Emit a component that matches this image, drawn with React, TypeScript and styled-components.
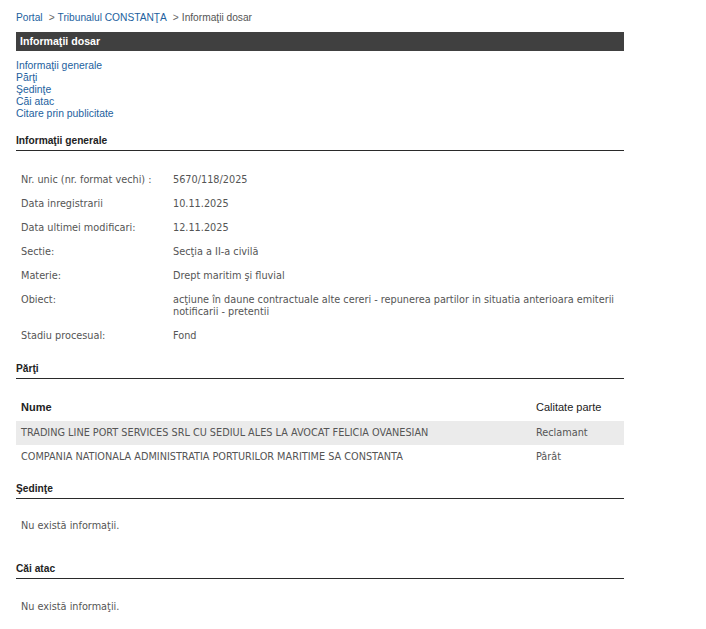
import styled, { createGlobalStyle } from 'styled-components';

const GlobalStyle = createGlobalStyle`
  html, body {
    margin: 0;
    padding: 0;
    background: #fff;
  }
  body {
    font-family: "Liberation Sans", Arial, sans-serif;
  }
`;

const body = '"DejaVu Sans Condensed", "DejaVu Sans", Tahoma, sans-serif';

const Page = styled.div`
  width: 608px;
  padding: 11px 0 20px 16px;
`;

const Crumbs = styled.div`
  font-size: 10.2px;
  line-height: 14px;
  height: 14px;
  color: #555;
  margin-bottom: 7px;
  white-space: nowrap;
`;

const Crumb = styled.a`
  color: #1d5f9e;
  text-decoration: none;
`;

const Sep = styled.span`
  color: #666;
  margin: 0 3px 0 6px;
`;

const TitleBar = styled.div`
  height: 19px;
  line-height: 19px;
  background: #404040;
  color: #fff;
  font-weight: bold;
  font-size: 10.6px;
  padding-left: 4px;
`;

const Nav = styled.nav`
  display: flex;
  flex-direction: column;
  margin-top: 9px;
  font-size: 10.4px;
  line-height: 12px;
`;

const NavLink = styled.a`
  color: #1d5f9e;
  text-decoration: none;
`;

const SectionTitle = styled.h3<{ $gap: number }>`
  margin: ${(p) => p.$gap}px 0 0;
  padding-bottom: 3px;
  border-bottom: 1px solid #2a2a2a;
  font-size: 10.2px;
  line-height: 13px;
  font-weight: bold;
  color: #222;
`;

const InfoTable = styled.table`
  width: 100%;
  table-layout: fixed;
  border-collapse: collapse;
  margin-top: 17px;
  font-family: ${body};
  font-size: 10.8px;
  color: #555;

  td {
    padding: 6px 5px;
    line-height: 12px;
    vertical-align: top;
  }
`;

const PartyTable = styled.table`
  width: 100%;
  table-layout: fixed;
  border-collapse: collapse;
  margin-top: 15px;
  font-family: ${body};
  font-size: 10.8px;
  color: #555;

  td {
    padding: 6px 5px;
    line-height: 12px;
    height: 12px;
    white-space: nowrap;
  }
`;

const HeadCell = styled.th<{ $bold?: boolean }>`
  text-align: left;
  padding: 7px 5px 8px;
  line-height: 12px;
  font-family: "Liberation Sans", Arial, sans-serif;
  font-size: 11px;
  font-weight: ${(p) => (p.$bold ? 'bold' : 'normal')};
  color: #222;
`;

const PartyRow = styled.tr<{ $shaded?: boolean }>`
  background: ${(p) => (p.$shaded ? '#ebebeb' : 'transparent')};
`;

const Empty = styled.p<{ $gap: number }>`
  margin: ${(p) => p.$gap}px 0 0;
  padding-left: 5px;
  font-family: ${body};
  font-size: 10.8px;
  line-height: 12px;
  color: #555;
`;

const info: [string, string][] = [
  ['Nr. unic (nr. format vechi) :', '5670/118/2025'],
  ['Data inregistrarii', '10.11.2025'],
  ['Data ultimei modificari:', '12.11.2025'],
  ['Sectie:', 'Secţia a II-a civilă'],
  ['Materie:', 'Drept maritim şi fluvial'],
  [
    'Obiect:',
    'acţiune în daune contractuale alte cereri - repunerea partilor in situatia anterioara emiterii notificarii - pretentii',
  ],
  ['Stadiu procesual:', 'Fond'],
];

const parties = [
  { name: 'TRADING LINE PORT SERVICES SRL CU SEDIUL ALES LA AVOCAT FELICIA OVANESIAN', role: 'Reclamant' },
  { name: 'COMPANIA NATIONALA ADMINISTRATIA PORTURILOR MARITIME SA CONSTANTA', role: 'Pârât' },
];

export default function App() {
  return (
    <Page>
      <GlobalStyle />
      <Crumbs>
        <Crumb href="#">Portal</Crumb>
        <Sep>&gt;</Sep>
        <Crumb href="#">Tribunalul CONSTANŢA</Crumb>
        <Sep>&gt;</Sep>
        Informaţii dosar
      </Crumbs>
      <TitleBar>Informaţii dosar</TitleBar>
      <Nav>
        <NavLink href="#">Informaţii generale</NavLink>
        <NavLink href="#">Părţi</NavLink>
        <NavLink href="#">Şedinţe</NavLink>
        <NavLink href="#">Căi atac</NavLink>
        <NavLink href="#">Citare prin publicitate</NavLink>
      </Nav>

      <SectionTitle $gap={14}>Informaţii generale</SectionTitle>
      <InfoTable>
        <colgroup>
          <col style={{ width: 152 }} />
          <col />
        </colgroup>
        <tbody>
          {info.map(([k, v]) => (
            <tr key={k}>
              <td>{k}</td>
              <td>{v}</td>
            </tr>
          ))}
        </tbody>
      </InfoTable>

      <SectionTitle $gap={14}>Părţi</SectionTitle>
      <PartyTable>
        <colgroup>
          <col />
          <col style={{ width: 93 }} />
        </colgroup>
        <thead>
          <tr>
            <HeadCell $bold>Nume</HeadCell>
            <HeadCell>Calitate parte</HeadCell>
          </tr>
        </thead>
        <tbody>
          {parties.map((p, i) => (
            <PartyRow key={p.name} $shaded={i === 0}>
              <td>{p.name}</td>
              <td>{p.role}</td>
            </PartyRow>
          ))}
        </tbody>
      </PartyTable>

      <SectionTitle $gap={13}>Şedinţe</SectionTitle>
      <Empty $gap={21}>Nu există informaţii.</Empty>

      <SectionTitle $gap={30}>Căi atac</SectionTitle>
      <Empty $gap={22}>Nu există informaţii.</Empty>
    </Page>
  );
}
